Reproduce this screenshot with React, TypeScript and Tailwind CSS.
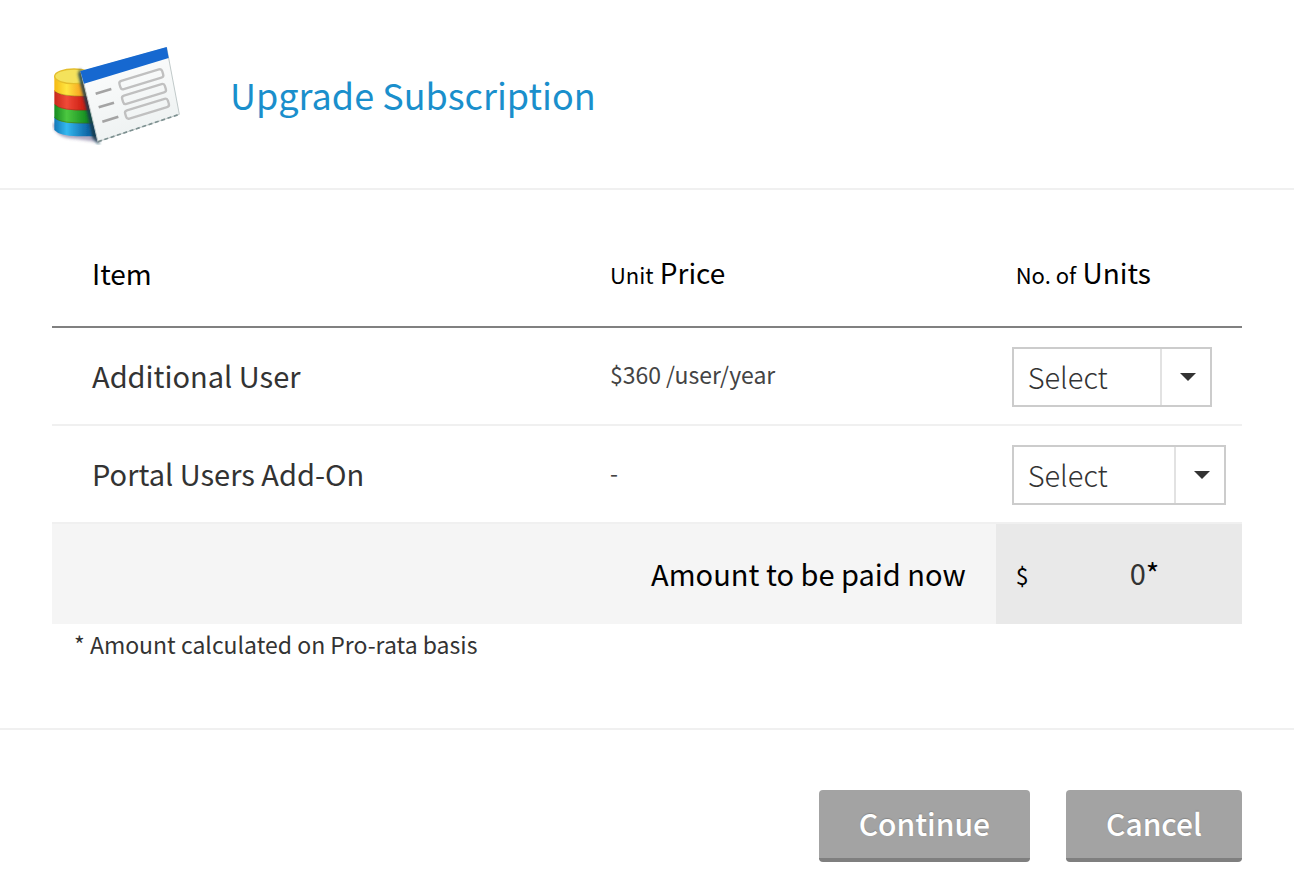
import { useState } from 'react';

const items = [
  {
    id: 'additional-user',
    name: 'Additional User',
    price: '$360 /user/year',
    options: ['1', '2', '3', '4', '5'],
    width: 'w-[200px]',
  },
  {
    id: 'portal-users',
    name: 'Portal Users Add-On',
    price: '-',
    options: ['100', '200', '500'],
    width: 'w-[214px]',
  },
];

function Logo() {
  return (
    <svg width="130" height="100" viewBox="37 30 390 300" className="shrink-0" aria-hidden="true">
      <defs>
        <linearGradient id="yellow" x1="0" x2="1">
          <stop offset="0" stopColor="#f5b914" />
          <stop offset="0.3" stopColor="#ffe640" />
          <stop offset="0.7" stopColor="#f59a1c" />
        </linearGradient>
        <linearGradient id="red" x1="0" x2="1">
          <stop offset="0" stopColor="#c8281c" />
          <stop offset="0.3" stopColor="#f04a38" />
          <stop offset="0.8" stopColor="#c4140c" />
        </linearGradient>
        <linearGradient id="green" x1="0" x2="1">
          <stop offset="0" stopColor="#168a20" />
          <stop offset="0.3" stopColor="#4cc840" />
          <stop offset="0.8" stopColor="#148c20" />
        </linearGradient>
        <linearGradient id="blue" x1="0" x2="1">
          <stop offset="0" stopColor="#1478b8" />
          <stop offset="0.3" stopColor="#34b8f0" />
          <stop offset="0.8" stopColor="#1068a8" />
        </linearGradient>
        <linearGradient id="paper" x1="0" y1="0" x2="0.3" y2="1">
          <stop offset="0" stopColor="#ffffff" />
          <stop offset="1" stopColor="#eef2f2" />
        </linearGradient>
        <filter id="shadow" x="-20%" y="-20%" width="140%" height="140%">
          <feGaussianBlur stdDeviation="4" />
        </filter>
        <filter id="soft" x="-5%" y="-5%" width="110%" height="110%">
          <feGaussianBlur stdDeviation="2" />
        </filter>
      </defs>

      <g filter="url(#soft)">
        {/* Database stack */}
        <path d="M38 265 Q44 310 110 312 L178 322 L160 265Z" fill="#5a5080" opacity="0.5" filter="url(#shadow)" />
        <path d="M44 245 V285 Q60 303 112 304 L168 304 V245Z" fill="url(#blue)" />
        <path d="M44 207 V248 Q60 264 105 265 L168 265 V207Z" fill="url(#green)" />
        <path d="M44 165 V207 Q60 224 105 226 L168 226 V165Z" fill="url(#red)" />
        <path d="M44 122 V168 Q60 183 105 184 L168 184 V122Z" fill="url(#yellow)" />
        <ellipse cx="103" cy="124" rx="58" ry="22" fill="#f4e25c" stroke="#e4bd2c" strokeWidth="4" />
        <path d="M46 170 Q62 184 140 184 M46 210 Q62 226 150 226 M46 250 Q62 265 155 265" fill="none" stroke="#5a3a10" strokeOpacity="0.35" strokeWidth="3" />

        {/* Form card */}
        <path d="M122 108 L175 322 L160 306 Q142 210 118 116Z" fill="#173c50" stroke="#173c50" strokeWidth="5" filter="url(#shadow)" />
        <path d="M124 110 L381 38 L419 238 L175 320Z" fill="url(#paper)" stroke="#c0c9c9" strokeWidth="3" />
        <path d="M175 320 L419 238" fill="none" stroke="#7d9090" strokeWidth="5" strokeDasharray="12 8" />
        <path d="M122 108 L381 36 L387 69 L133 146Z" fill="#1468d0" />
        <g fill="none" stroke="#c0c0c0" strokeWidth="7">
          <rect x="238" y="120" width="134" height="26" rx="8" transform="rotate(-17 305 133)" />
          <rect x="246" y="164" width="134" height="26" rx="8" transform="rotate(-17 313 177)" />
          <rect x="255" y="208" width="134" height="26" rx="8" transform="rotate(-17 322 221)" />
          <path d="M168 176 L215 162 M177 217 L223 203 M188 260 L236 245" stroke="#a4a4a4" strokeWidth="8" />
        </g>
      </g>
    </svg>
  );
}

export default function App() {
  const [units, setUnits] = useState<Record<string, string>>({});

  return (
    <main className="bg-white font-['Noto_Sans_CJK_SC',sans-serif] text-[29px] leading-10 text-[#333]">
      <header className="flex items-center gap-12 border-b-2 border-[#f0f0f0] px-[52px] pt-[45px] pb-[43px]">
        <Logo />
        <h1 className="pb-0.5 text-[36px] leading-[52px] text-[#1a8fcc]">Upgrade Subscription</h1>
      </header>

      <section className="border-b-2 border-[#f0f0f0] px-[52px] pt-9 pb-16">
        <table className="w-full table-fixed border-collapse text-left">
          <colgroup>
            <col className="w-[45.2%]" />
            <col className="w-[34.1%]" />
            <col />
          </colgroup>
          <thead>
            <tr className="h-[101px] border-b-2 border-[#808080] text-[28px] text-black">
              <th className="pb-1.5 pl-10 font-normal">Item</th>
              <th className="px-5 pb-1.5 font-normal">
                <span className="text-[22px]">Unit</span> Price
              </th>
              <th className="px-5 pb-1.5 font-normal">
                <span className="text-[22px]">No. of</span> Units
              </th>
            </tr>
          </thead>
          <tbody>
            {items.map((item) => (
              <tr key={item.id} className="h-[98px] border-b-2 border-[#f0f0f0]">
                <td className="pb-0.5 pl-10">
                  <label htmlFor={item.id}>{item.name}</label>
                </td>
                <td className="px-5 pb-1 text-[23px] text-[#444]">{item.price}</td>
                <td className="pt-0.5 pl-4">
                  <div className={`relative h-[60px] ${item.width}`}>
                    <select
                      id={item.id}
                      value={units[item.id] ?? ''}
                      onChange={(e) => setUnits({ ...units, [item.id]: e.target.value })}
                      className="h-full w-full appearance-none border-2 border-[#ccc] bg-white pb-0.5 pl-3.5 font-light"
                    >
                      <option value="">Select</option>
                      {item.options.map((n) => (
                        <option key={n}>{n}</option>
                      ))}
                    </select>
                    <span className="pointer-events-none absolute inset-y-0.5 right-0.5 flex w-[50px] items-center justify-center border-l-2 border-[#e2e2e2]">
                      <svg width="16" height="8" viewBox="0 0 16 8" className="ml-1">
                        <path d="M0 0h16L8 8z" fill="#333" />
                      </svg>
                    </span>
                  </div>
                </td>
              </tr>
            ))}
          </tbody>
          <tfoot>
            <tr className="h-[101px] text-black">
              <td colSpan={2} className="bg-[#f5f5f5] pr-[30px] pb-0.5 text-right">
                Amount to be paid now
              </td>
              <td className="bg-[#e9e9e9] px-5 pb-0.5">
                <div className="flex items-baseline">
                  <span className="w-[114px] text-[23px]">$</span>
                  <span className="text-[#333]">0</span>*
                </div>
              </td>
            </tr>
          </tfoot>
        </table>
        <p className="pl-[22px] text-[23px]">* Amount calculated on Pro-rata basis</p>
      </section>

      <footer className="flex justify-end gap-9 px-[52px] pt-[60px] pb-4 text-[30px] font-medium text-white">
        <button
          type="button"
          className="h-[72px] rounded-sm border-b-4 border-[#7f7f7f] bg-[#a3a3a3] px-10 pb-0.5 text-shadow-[0_-1px_1px_#888]"
        >
          Continue
        </button>
        <button
          type="button"
          className="h-[72px] rounded-sm border-b-4 border-[#7f7f7f] bg-[#a3a3a3] px-10 pb-0.5 text-shadow-[0_-1px_1px_#888]"
        >
          Cancel
        </button>
      </footer>
    </main>
  );
}
